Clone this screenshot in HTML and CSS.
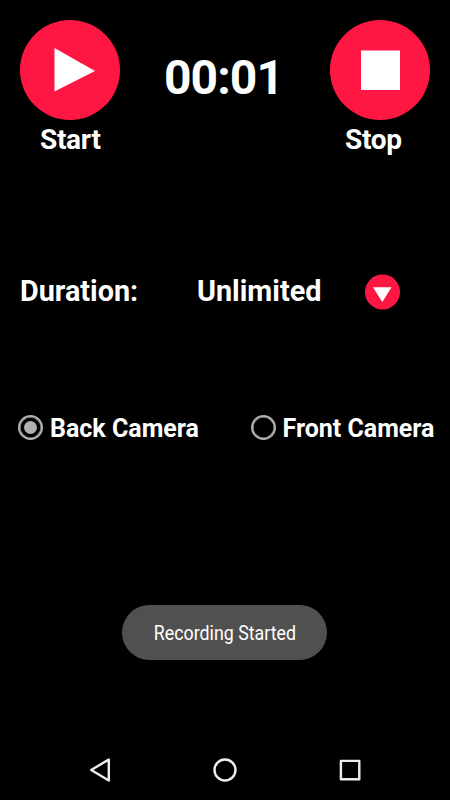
FILE: index.html
```html
<!DOCTYPE html>
<html lang="en">
<head>
    <meta charset="UTF-8">
    <meta name="viewport" content="width=device-width, initial-scale=1.0">
    <title>Video Recorder</title>
    <link rel="stylesheet" href="styles.css">
</head>
<body>
    <main class="screen">
        <section class="controls">
            <button class="control" id="start-button">
                <svg width="100" height="100" viewBox="0 0 100 100">
                    <circle cx="50" cy="50" r="50" fill="#ff1744"/>
                    <path d="M34.500 28L75 51L34.500 71.500Z" fill="#fff"/>
                </svg>
                <span class="control-label">Start</span>
            </button>
            <div class="timer">00:01</div>
            <button class="control stop" id="stop-button">
                <svg width="100" height="100" viewBox="0 0 100 100">
                    <circle cx="50" cy="50" r="50" fill="#ff1744"/>
                    <path d="M31 30.500H70V70H31Z" fill="#fff"/>
                </svg>
                <span class="control-label">Stop</span>
            </button>
        </section>

        <section class="duration">
            <span class="duration-label">Duration:</span>
            <span class="duration-value">Unlimited</span>
            <button class="dropdown" aria-label="Choose duration">
                <svg width="36" height="36" viewBox="0 0 36 36">
                    <circle cx="18.500" cy="18" r="17.500" fill="#ff1744"/>
                    <path d="M9 13.300H27.500L18.300 28Z" fill="#fff"/>
                </svg>
            </button>
        </section>

        <section class="cameras">
            <label class="camera back"><input type="radio" name="camera" checked><span>Back Camera</span></label>
            <label class="camera"><input type="radio" name="camera"><span>Front Camera</span></label>
        </section>

        <div class="toast"><span>Recording Started</span></div>

        <nav class="navbar">
            <svg width="24" height="26" viewBox="0 0 24 26"><path d="M20.800 2.500V23.500L3.200 13Z"/></svg>
            <svg width="26" height="26" viewBox="0 0 26 26"><circle cx="13" cy="13" r="10.500"/></svg>
            <svg width="24" height="26" viewBox="0 0 24 26"><rect x="2.900" y="3.900" width="18.400" height="18.400"/></svg>
        </nav>
    </main>
</body>
</html>
```

FILE: styles.css
```css
body {
    margin: 0;
    background: #000;
    color: #fff;
    font-family: Roboto, sans-serif;
    font-weight: bold;
}

button {
    margin: 0;
    padding: 0;
    border: 0;
    background: none;
    color: inherit;
    font: inherit;
}

svg {
    display: block;
}

.screen {
    display: flex;
    flex-direction: column;
    height: 800px;
    overflow: hidden;
}

.controls {
    display: flex;
    justify-content: space-between;
    height: 245px;
    padding: 20px 20px 0;
    box-sizing: border-box;
}

.control {
    display: flex;
    flex-direction: column;
    align-items: flex-start;
    width: 100px;
}

.control-label {
    margin-left: 20px;
    font-size: 28px;
    line-height: 40px;
    letter-spacing: -0.3px;
}

.stop .control-label {
    margin-left: 15px;
}

.timer {
    margin: 28px 3px 0 0;
    font-size: 48px;
    line-height: 60px;
    letter-spacing: -0.9px;
}

.duration {
    display: flex;
    align-items: center;
    height: 93px;
    padding-left: 20px;
    font-size: 28.8px;
}

.duration-label {
    width: 177px;
}

.duration-value {
    width: 167px;
}

.duration-label,
.duration-value {
    margin-top: -2px;
}

.cameras {
    display: flex;
    height: 180px;
    padding-left: 17px;
    align-items: center;
    font-size: 25px;
}

.camera {
    display: flex;
    align-items: center;
    gap: 7px;
    white-space: nowrap;
}

.back {
    width: 232.5px;
}

.camera input {
    appearance: none;
    display: flex;
    width: 25px;
    height: 25px;
    margin: -1px 0 0 1px;
    box-sizing: border-box;
    border: 2px solid #b0b0b0;
    border-radius: 50%;
    box-shadow: inset 0 0 0 0.5px #b0b0b0;
}

.camera input:checked::before {
    content: "";
    width: 13px;
    height: 13px;
    margin: auto;
    border-radius: 50%;
    background: #b0b0b0;
}

.toast {
    display: flex;
    align-items: center;
    justify-content: center;
    width: 205px;
    height: 55px;
    margin: 87px auto 0 122px;
    border-radius: 28px;
    background: #505050;
    font-size: 20px;
    font-weight: normal;
    white-space: nowrap;
}

/* condensed lettering */
.toast span {
    transform: scaleX(0.89);
}

.navbar {
    display: flex;
    justify-content: space-between;
    margin: 97px 88px 0;
    fill: none;
    stroke: #eee;
    stroke-width: 2.4;
    stroke-linejoin: round;
}
```
